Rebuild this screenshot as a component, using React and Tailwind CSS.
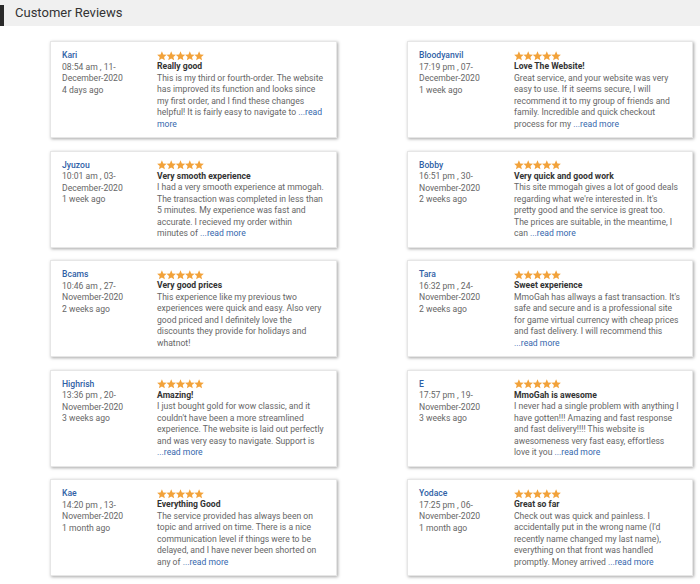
import React from "react";

const reviews = [
  {
    name: "Kari",
    meta: ["08:54 am , 11-", "December-2020", "4 days ago"],
    title: "Really good",
    lines: [
      ["This is my third or fourth-order. The website", ""],
      ["has improved its function and looks since", ""],
      ["my first order, and I find these changes", ""],
      ["helpful! It is fairly easy to navigate to ", "...read"],
      ["", "more"],
    ],
  },
  {
    name: "Bloodyanvil",
    meta: ["17:19 pm , 07-", "December-2020", "1 week ago"],
    title: "Love The Website!",
    lines: [
      ["Great service, and your website was very", ""],
      ["easy to use. If it seems secure, I will", ""],
      ["recommend it to my group of friends and", ""],
      ["family. Incredible and quick checkout", ""],
      ["process for my ", "...read more"],
    ],
  },
  {
    name: "Jyuzou",
    meta: ["10:01 am , 03-", "December-2020", "1 week ago"],
    title: "Very smooth experience",
    lines: [
      ["I had a very smooth experience at mmogah.", ""],
      ["The transaction was completed in less than", ""],
      ["5 minutes. My experience was fast and", ""],
      ["accurate. I recieved my order within", ""],
      ["minutes of ", "...read more"],
    ],
  },
  {
    name: "Bobby",
    meta: ["16:51 pm , 30-", "November-2020", "2 weeks ago"],
    title: "Very quick and good work",
    lines: [
      ["This site mmogah gives a lot of good deals", ""],
      ["regarding what we're interested in. It's", ""],
      ["pretty good and the service is great too.", ""],
      ["The prices are suitable, in the meantime, I", ""],
      ["can ", "...read more"],
    ],
  },
  {
    name: "Bcams",
    meta: ["10:46 am , 27-", "November-2020", "2 weeks ago"],
    title: "Very good prices",
    lines: [
      ["This experience like my previous two", ""],
      ["experiences were quick and easy. Also very", ""],
      ["good priced and I definitely love the", ""],
      ["discounts they provide for holidays and", ""],
      ["whatnot!", ""],
    ],
  },
  {
    name: "Tara",
    meta: ["16:32 pm , 24-", "November-2020", "2 weeks ago"],
    title: "Sweet experience",
    lines: [
      ["MmoGah has allways a fast transaction. It's", ""],
      ["safe and secure and is a professional site", ""],
      ["for game virtual currency with cheap prices", ""],
      ["and fast delivery. I will recommend this", ""],
      ["", "...read more"],
    ],
  },
  {
    name: "Highrish",
    meta: ["13:36 pm , 20-", "November-2020", "3 weeks ago"],
    title: "Amazing!",
    lines: [
      ["I just bought gold for wow classic, and it", ""],
      ["couldn't have been a more streamlined", ""],
      ["experience. The website is laid out perfectly", ""],
      ["and was very easy to navigate. Support is", ""],
      ["", "...read more"],
    ],
  },
  {
    name: "E",
    meta: ["17:57 pm , 19-", "November-2020", "3 weeks ago"],
    title: "MmoGah is awesome",
    lines: [
      ["I never had a single problem with anything I", ""],
      ["have gotten!!! Amazing and fast response", ""],
      ["and fast delivery!!!! This website is", ""],
      ["awesomeness very fast easy, effortless", ""],
      ["love it you ", "...read more"],
    ],
  },
  {
    name: "Kae",
    meta: ["14:20 pm , 13-", "November-2020", "1 month ago"],
    title: "Everything Good",
    lines: [
      ["The service provided has always been on", ""],
      ["topic and arrived on time. There is a nice", ""],
      ["communication level if things were to be", ""],
      ["delayed, and I have never been shorted on", ""],
      ["any of ", "...read more"],
    ],
  },
  {
    name: "Yodace",
    meta: ["17:25 pm , 06-", "November-2020", "1 month ago"],
    title: "Great so far",
    lines: [
      ["Check out was quick and painless. I", ""],
      ["accidentally put in the wrong name (I'd", ""],
      ["recently name changed my last name),", ""],
      ["everything on that front was handled", ""],
      ["promptly. Money arrived ", "...read more"],
    ],
  },
];

function Stars() {
  const star = (cx) => {
    const pts = [];
    for (let i = 0; i < 10; i++) {
      const r = i % 2 === 0 ? 5.0 : 2.3;
      const a = (Math.PI / 5) * i - Math.PI / 2;
      pts.push(`${(cx + r * Math.cos(a)).toFixed(2)},${(5.3 + r * Math.sin(a)).toFixed(2)}`);
    }
    return pts.join(" ");
  };
  return (
    <svg width="47" height="10" viewBox="0 0 47 10">
      {[0, 1, 2, 3, 4].map((i) => (
        <polygon key={i} points={star(4.9 + i * 9.3)} fill="#f2a23a" />
      ))}
    </svg>
  );
}

function Card({ r }) {
  return (
    <div className="h-[97px] bg-white border border-[#e6e6e6] shadow-[1px_1px_3px_rgba(0,0,0,0.35)] pt-[8px] pl-[11px] flex text-[8.6px] leading-[11.5px]">
      <div className="w-[95px] shrink-0">
        <div className="text-[#2f5fa6] font-medium">{r.name}</div>
        {r.meta.map((m, i) => (
          <div key={i} className="text-[#666] whitespace-nowrap">
            {m}
          </div>
        ))}
      </div>
      <div className="flex-1">
        <div className="h-[11px] flex items-center">
          <Stars />
        </div>
        <div className="text-[#333] font-bold">{r.title}</div>
        {r.lines.map(([t, link], i) => (
          <div key={i} className="text-[#666] whitespace-nowrap">
            {t}
            {link && <span className="text-[#3567ad]">{link}</span>}
          </div>
        ))}
      </div>
    </div>
  );
}

export default function App() {
  return (
    <div className="w-[700px] h-[584px] bg-white overflow-hidden font-['Roboto',_'Liberation_Sans',_sans-serif]">
      <div className="h-[26px] bg-[#f0f0f0] flex items-end">
        <div className="w-[4px] h-[21px] bg-[#2a2a2a]" />
        <div className="h-[26px] flex items-center pl-[11px] text-[13px] text-[#333]">
          Customer Reviews
        </div>
      </div>
      <div className="grid grid-cols-[287px_286px] gap-x-[70px] gap-y-[12.5px] pl-[50px] pt-[15px]">
        {reviews.map((r, i) => (
          <Card key={i} r={r} />
        ))}
      </div>
    </div>
  );
}
